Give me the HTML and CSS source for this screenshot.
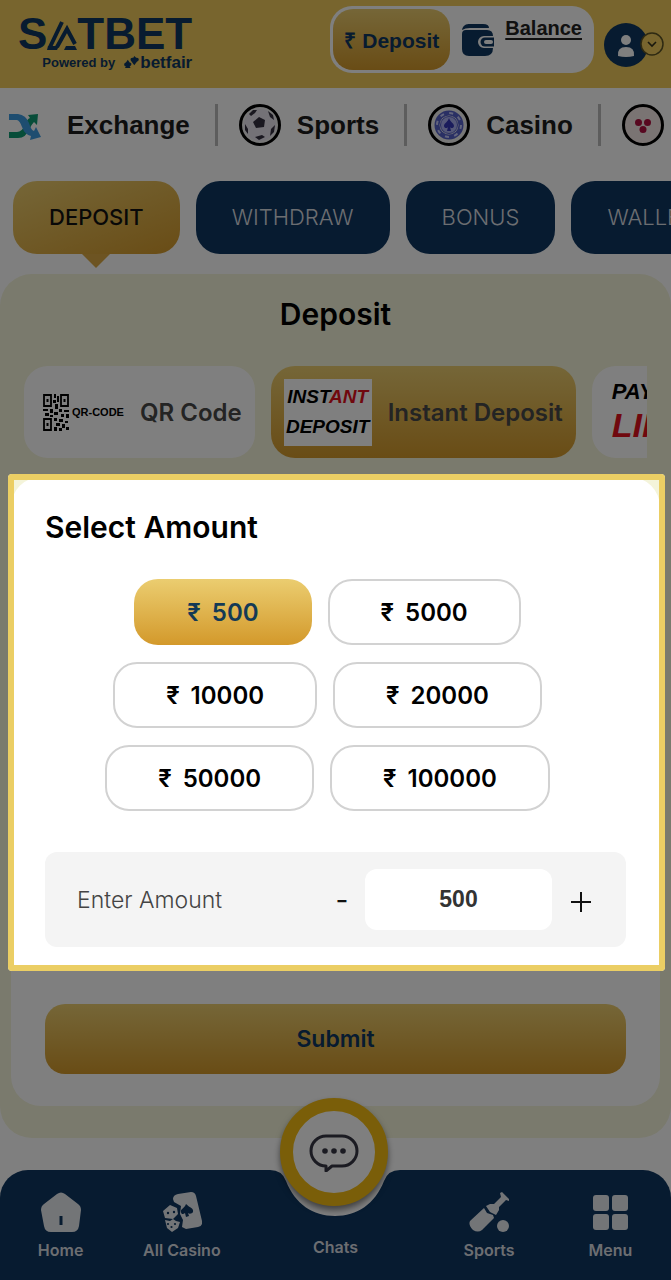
FILE: index.html
```
<!DOCTYPE html>
<html lang="en">
<head>
	<meta charset="utf-8">
	<meta name="viewport" content="width=device-width, initial-scale=1">
	<title>Satbet - Deposit</title>
	<link rel="stylesheet" href="styles.css">
</head>

<body>
	<!-- TOP -->
	<header class="top">
		<a href="#" class="logo">
			<span class="logo-name">S<svg class="logo-a" viewBox="0 0 30 32" role="img" aria-label="A"><path d="M3 29L15 4M10 29l10-18 8 15" fill="none" stroke="#0e3660" stroke-width="4"/><path d="M1 28h11l-2 4H0zM19 28h9l2 4H17z" fill="#0e3660"/></svg>TBET</span>
			<span class="logo-sub">
				<span>Powered by</span>
				<svg class="logo-mark" viewBox="0 0 16 14"><path d="M4 4l2 3c3 0 2 4 0 4l1 2H1l1-2C-1 11 0 7 2 7zM11 0l2 2c3-1 4 3 1 4l-3 4-3-4C6 4 7 1 10 2z" fill="#0e3660"/></svg>
				<b>betfair</b>
			</span>
		</a>
		<div class="top-right">
			<div class="wallet">
				<button type="button" class="wallet-btn">₹ Deposit</button>
				<svg class="wallet-icon" viewBox="0 0 34 34"><path d="M1 7c1-5 4-6 8-6h13q6 0 6 4H9Q4 5 1 7z" fill="#0e3660"/><path d="M1 11q0-4 4-4h21q6 0 6 6H23a6 6 0 0 0 0 12h9q0 8-8 8H8q-7 0-7-7z" fill="#0e3660"/><path d="M33 14.500H24a4.500 4.500 0 0 0 0 9h9z" fill="#0e3660"/><rect x="23" y="17" width="9" height="4" rx="2" fill="#fff"/></svg>
				<a href="#" class="balance">Balance</a>
			</div>
			<button type="button" class="profile" aria-label="Profile">
				<svg class="profile-icon" viewBox="0 0 60 46"><circle cx="22" cy="23" r="22" fill="#0e3660"/><circle cx="22" cy="18" r="5" fill="#fff"/><path d="M14 34q-1-9 8-9t8 9q-8 2-16 0z" fill="#fff"/><circle cx="48" cy="22" r="11" fill="#f0cb5c" stroke="#5c5324" stroke-width="1.500"/><path d="M44 20l4 4 4-4" fill="none" stroke="#33301c" stroke-width="1.600"/></svg>
			</button>
		</div>
	</header>

	<!-- Games menu -->
	<nav class="games">
		<a href="#" class="game">
			<svg class="game-icon" viewBox="0 0 42 42"><path d="M0 28h8q5 0 8-7 2-6 5-7l-2-3 10-1-1 11-3-3q-2 2-4 6-4 10-12 10H0z" fill="#0e9a72"/><path d="M0 10h9q8 1 11 9 2 7 5 8l2-4 5 10-11 3 1-4q-6-1-9-9-2-6-5-7H0z" fill="#3d9be0"/></svg>
			Exchange
		</a>
		<a href="#" class="game">
			<svg class="game-icon" viewBox="0 0 42 42"><circle cx="21" cy="21" r="19.500" fill="#eee" stroke="#000" stroke-width="3"/><circle cx="21" cy="21" r="16" fill="#e8e4ee"/><path d="M20 13l6 3-1 7-8 1-3-6zM10 10l4-4 4 0-2 3-4 3zM29 7l5 4 1 5-4-3zM36 21l-1 7-4 4 1-7zM16 33l7-2 3 2-6 3zM6 20l3 5v5l-3-4z" fill="#343040"/></svg>
			Sports
		</a>
		<a href="#" class="game">
			<svg class="game-icon" viewBox="0 0 42 42"><circle cx="21" cy="21" r="19.500" fill="#eee" stroke="#000" stroke-width="3"/><circle cx="21" cy="21" r="12" fill="none" stroke="#5560c8" stroke-width="5"/><circle cx="21" cy="21" r="12" fill="none" stroke="#c4c9fa" stroke-width="2" stroke-dasharray="4 5.400"/><circle cx="21" cy="21" r="8.500" fill="#aab0f0" stroke="#5560c8"/><path d="M21 14c1 4 5 5 5 8 0 2-3 3-4 1l1 4h-4l1-4c-1 2-4 1-4-1 0-3 4-4 5-8z" fill="#3438b8"/></svg>
			Casino
		</a>
		<a href="#" class="game">
			<svg class="game-icon" viewBox="0 0 42 42" role="img" aria-label="More games"><circle cx="21" cy="21" r="19.500" fill="#f4e9e6" stroke="#000" stroke-width="3"/><g fill="#b01040"><circle cx="16.500" cy="18.500" r="3.500"/><circle cx="25.500" cy="18.500" r="3.500"/><circle cx="21" cy="25.500" r="3.500"/></g></svg>
		</a>
	</nav>

	<nav class="tabs">
		<a href="#" class="tab active">DEPOSIT</a>
		<a href="#" class="tab">WITHDRAW</a>
		<a href="#" class="tab">BONUS</a>
		<a href="#" class="tab">WALLET</a>
	</nav>

	<main class="panel">
		<h1 class="panel-title">Deposit</h1>

		<!-- Payment methods -->
		<div class="methods">
			<button type="button" class="method">
				<span class="qr">
					<svg class="qr-icon" viewBox="0 0 26 37"><g fill="none" stroke="#000" stroke-width="1.800"><path d="M1 1h7v11H1zM18 1h7v11h-7zM1 25h7v11H1z"/></g><path d="M3.500 5h2v3h-2zM20.500 5h2v3h-2zM3.500 29h2v3h-2zM11 0h2v4h-2zM14 2h2v6h-2zM10 6h3v3h-3zM12 10h3v5h-3zM0 15h5v2H0zM7 15h3v4H7zM16 15h3v3h-3zM21 16h5v2h-5zM2 19h4v3H2zM11 18h4v3h-4zM18 20h3v3h-3zM23 20h3v4h-3zM7 21h3v2H7zM11 24h3v3h-3zM16 25h4v3h-4zM22 27h3v2h-3zM13 29h4v3h-4zM19 30h3v4h-3zM11 33h3v4h-3zM16 34h3v3h-3zM23 33h3v3h-3z"/></svg>
					QR-CODE
				</span>
				QR Code
			</button>
			<button type="button" class="method active">
				<span class="instant"><span>INST<i>ANT</i></span><span>DEPOSIT</span></span>
				Instant Deposit
			</button>
			<button type="button" class="method">
				<span class="pay"><span>PAY</span><i>LINK</i></span>
			</button>
		</div>

		<form class="card">
			<section class="amount">
				<h2 class="amount-title">Select Amount</h2>
				<div class="chips">
					<button type="button" class="chip active"><span>₹</span>500</button>
					<button type="button" class="chip"><span>₹</span>5000</button>
					<button type="button" class="chip"><span>₹</span>10000</button>
					<button type="button" class="chip"><span>₹</span>20000</button>
					<button type="button" class="chip"><span>₹</span>50000</button>
					<button type="button" class="chip"><span>₹</span>100000</button>
				</div>
				<div class="enter">
					<label for="amount" class="enter-label">Enter Amount</label>
					<button type="button" class="step">-</button>
					<input type="text" id="amount" class="enter-input" value="500" inputmode="numeric">
					<button type="button" class="step" aria-label="Increase"><svg class="plus" viewBox="0 0 20 20"><path d="M10 0v20M0 10h20" stroke="#111" stroke-width="2"/></svg></button>
				</div>
				<div class="spotlight"></div>
			</section>
			<button type="submit" class="submit">Submit</button>
		</form>
	</main>

	<!-- Bottom menu -->
	<nav class="bottom">
		<svg class="notch" viewBox="0 0 130 47"><path d="M0 0Q12 0 16 11C25 34 43 46 65 46S105 34 114 11Q118 0 130 0z" fill="#fff"/></svg>
		<a href="#" class="link">
			<svg class="link-icon" viewBox="0 0 40 40"><path d="M16 2q4-3 8 0l13 10q3 2 3 6l-2 16q-1 6-7 6H10q-6 0-7-6L0 18q0-4 3-6z" fill="#fff"/><rect x="18.500" y="24" width="3" height="9" fill="#0e3660"/></svg>
			Home
		</a>
		<a href="#" class="link">
			<svg class="link-icon" viewBox="0 0 40 40"><path d="M11 7q0-4 5-5l13-2q4 0 5 4l6 25q1 5-4 6l-12 2-4-2 1-7-3-6 1-8-7-4z" fill="#fff"/><path d="M24 12c4 4 8 4 7 8-1 2-4 2-5 1l1 3-3 1-1-4c-2 2-4 1-4-1-1-3 4-4 5-8z" fill="#0e3660"/><path d="M8 13l7 3 1 6-5 5-8-1-2-7zM3 28l5 1 3-2 3 2 4 1-2 6-6 4-5-4z" fill="#fff"/><g fill="#0e3660"><circle cx="6" cy="21" r="1.200"/><circle cx="12" cy="20" r="1.200"/><circle cx="6" cy="32" r="1.100"/><circle cx="13" cy="32" r="1.100"/><circle cx="9.500" cy="35" r="1.100"/></g></svg>
			All Casino
		</a>
		<a href="#" class="link chats">Chats</a>
		<a href="#" class="link">
			<svg class="link-icon" viewBox="0 0 40 40"><g fill="#fff"><path d="M33 0l7 7v2l-3-1-7 7v3l-3 5-6-3-4-6 4-2h4l7-7-1-4z"/><path d="M15 16l3 5 6 2 1 3-12 12q-4 3-9 0-5-5-3-9z"/><circle cx="34" cy="34" r="6"/></g></svg>
			Sports
		</a>
		<a href="#" class="link">
			<svg class="link-icon" viewBox="0 0 40 40"><g fill="#fff"><rect x="3" y="3" width="16" height="16" rx="3"/><rect x="22" y="3" width="16" height="16" rx="3"/><rect x="3" y="22" width="16" height="16" rx="3"/><rect x="22" y="22" width="16" height="16" rx="3"/></g></svg>
			Menu
		</a>
		<button type="button" class="chat-btn" aria-label="Open chat">
			<svg class="chat-icon" viewBox="0 0 50 40"><path d="M17 4h16a15 15 0 0 1 0 30H23l-6 5v-5a15 15 0 0 1 0-30z" fill="none" stroke="#363644" stroke-width="3" stroke-linejoin="round"/><g fill="#363644"><circle cx="16" cy="19" r="2.800"/><circle cx="25" cy="19" r="2.800"/><circle cx="34" cy="19" r="2.800"/></g></svg>
		</button>
	</nav>
</body>
</html>
```

FILE: styles.css
```
*{
	box-sizing: border-box;
}

body{
	margin: 0;
	background-color: #fff;
	font-family: Inter, "Liberation Sans", sans-serif;
	overflow-x: hidden;
}

a{
	color: inherit;
	text-decoration: none;
}

button{
	border: 0;
	background: none;
	font-family: inherit;
	cursor: pointer;
}

svg{
	flex: none;
}

/* ---------- Top ---------- */
.top{
	display: flex;
	justify-content: space-between;
	align-items: flex-start;
	padding: 6px 7px 15px 18px;
	background-color: #f0cb5c;
	font-family: "Liberation Sans", sans-serif;
}

.logo{
	display: flex;
	flex-direction: column;
	align-items: flex-end;
	padding-top: 6px;
	color: #0e3660;
}

.logo-name{
	display: flex;
	align-items: center;
	font-size: 44px;
	font-weight: bold;
	line-height: 44px;
}

.logo-a{
	width: 30px;
	height: 32px;
}

.logo-sub{
	display: flex;
	align-items: center;
	gap: 9px;
	font-size: 13px;
	font-weight: bold;
	line-height: 8px;
}

.logo-sub b{
	margin-left: -8px;
	font-size: 17px;
}

.logo-mark{
	width: 15px;
	height: 13px;
}

.top-right{
	display: flex;
	gap: 10px;
}

.wallet{
	display: flex;
	align-items: flex-start;
	height: 67px;
	padding: 3px 12px 3px 3px;
	border-radius: 22px;
	background-color: #fff;
}

.wallet-btn{
	height: 61px;
	padding: 0 11px;
	border-radius: 20px;
	background: linear-gradient(#ebcd70, #d3992b);
	color: #0e3660;
	font-size: 21px;
	font-weight: bold;
}

.wallet-icon{
	width: 34px;
	height: 34px;
	margin: 14px 10px 0 11px;
}

.balance{
	margin-top: 7px;
	color: #222;
	font-size: 20px;
	font-weight: bold;
	line-height: 24px;
	text-decoration: underline;
	text-underline-offset: 3px;
}

.profile{
	padding: 10px 0 0;
}

.profile-icon{
	display: block;
	width: 60px;
	height: 46px;
}

/* ---------- Games menu ---------- */
.games{
	display: flex;
	overflow: hidden;
	padding: 16px 9px 35px;
	font-family: "Liberation Sans", sans-serif;
	font-size: 26px;
	font-weight: bold;
	color: #1c1c1c;
}

.game{
	display: flex;
	flex: none;
	align-items: center;
	gap: 16px;
}

.game + .game{
	margin-left: 25px;
	padding-left: 21px;
	border-left: 3px solid #bbb;
}

.game-icon{
	width: 42px;
	height: 42px;
}

/* ---------- Tabs ---------- */
.tabs{
	display: flex;
	gap: 16px;
	overflow: hidden;
	padding: 0 13px 20px;
}

.tab{
	position: relative;
	flex: none;
	padding: 0 36px;
	border-radius: 24px;
	background-color: #0e3660;
	color: #d9dce2;
	font-size: 22px;
	font-weight: 300;
	line-height: 73px;
}

.tab.active{
	background: linear-gradient(160deg, #ebcd70, #d3992b);
	color: #111;
	font-weight: 500;
}

.tab.active::after{
	content: "";
	position: absolute;
	top: 100%;
	left: 50%;
	margin-left: -14px;
	border: 14px solid transparent;
	border-top-color: #dba944;
	border-bottom: 0;
}

/* ---------- Deposit panel ---------- */
.panel{
	padding: 24px 0 32px;
	border-radius: 32px;
	background-color: #f4f4da;
}

.panel-title{
	margin: 0 0 36px;
	font-size: 30px;
	line-height: 32px;
	font-weight: 600;
	text-align: center;
}

.methods{
	display: flex;
	gap: 16px;
	overflow: hidden;
	margin: 0 24px 19px;
}

.method{
	display: flex;
	flex: none;
	align-items: center;
	gap: 16px;
	height: 92px;
	padding: 0 13px;
	border-radius: 24px;
	background-color: #fff;
	color: #484848;
	font-size: 24px;
	font-weight: 600;
}

.method.active{
	background: linear-gradient(#ebcd70, #d3992b);
}

.qr{
	display: flex;
	align-items: center;
	gap: 3px;
	margin-left: 6px;
	color: #000;
	font-family: "Liberation Sans", sans-serif;
	font-size: 11px;
	font-weight: bold;
}

.qr-icon{
	width: 26px;
	height: 37px;
}

.instant{
	display: flex;
	flex-direction: column;
	justify-content: center;
	align-items: center;
	width: 88px;
	height: 67px;
	background-color: #fff;
	color: #000;
	font-family: "Liberation Sans", sans-serif;
	font-size: 19px;
	font-style: italic;
	font-weight: bold;
	line-height: 30px;
}

.instant i,
.pay i{
	color: #e0101c;
}

.pay{
	display: flex;
	flex-direction: column;
	padding-left: 7px;
	color: #000;
	font-family: "Liberation Sans", sans-serif;
	font-size: 22px;
	font-style: italic;
	font-weight: bold;
	line-height: 26px;
	text-align: left;
}

.pay i{
	font-size: 34px;
	line-height: 40px;
}

/* ---------- Amount ---------- */
.card{
	margin: 0 11px;
	padding: 34px 34px 32px;
	border-radius: 30px;
	background-color: #fff;
}

.amount{
	position: relative;
	margin-bottom: 57px;
}

.amount-title{
	margin: 0 0 36px;
	font-size: 30px;
	line-height: 32px;
	font-weight: 600;
}

.chips{
	display: flex;
	flex-wrap: wrap;
	justify-content: center;
	margin-bottom: 24px;
}

.chip{
	height: 66px;
	margin: 0 16px 17px 0;
	padding: 0 51px;
	border: 2px solid #d2d2d2;
	border-radius: 24px;
	color: #000;
	font-size: 24px;
	font-weight: 600;
}

.chip span{
	margin-right: 11px;
}

.chip.active{
	border-color: transparent;
	background: linear-gradient(#ebcd70, #d3992b) border-box;
	color: #143a55;
}

.enter{
	display: flex;
	align-items: center;
	height: 95px;
	padding: 0 28px 0 32px;
	border-radius: 12px;
	background-color: #f4f4f4;
}

.enter-label{
	flex: 1;
	color: #444;
	font-size: 23px;
	font-weight: 300;
}

.enter-input{
	width: 187px;
	height: 61px;
	border: 0;
	border-radius: 12px;
	background-color: #fff;
	color: #333;
	font-family: "Liberation Sans", sans-serif;
	font-size: 23px;
	font-weight: bold;
	text-align: center;
}

.step{
	width: 46px;
	padding: 0;
	color: #111;
	font-size: 28px;
}

.step .plus{
	display: block;
	width: 20px;
	height: 20px;
	margin: 4px 0 0 19px;
}

.submit{
	display: block;
	width: 100%;
	height: 70px;
	border-radius: 20px;
	background: linear-gradient(#ebcd70, #d3992b);
	color: #0e3660;
	font-size: 23px;
	font-weight: 600;
}

/* darkens everything around the amount block */
.spotlight{
	position: absolute;
	inset: -37px -39px -24px -37px;
	z-index: 10;
	border: 6px solid #ebce64;
	border-radius: 4px;
	box-shadow: 0 0 0 2000px rgba(0,0,0,0.5);
	pointer-events: none;
}

/* ---------- Bottom menu ---------- */
.bottom{
	position: relative;
	display: grid;
	grid-template-columns: 1fr 1fr 186px 1fr 1fr;
	height: 110px;
	margin-top: 32px;
	padding-top: 22px;
	border-radius: 28px 28px 0 0;
	background-color: #0e3660;
}

.link{
	display: flex;
	flex-direction: column;
	align-items: center;
	gap: 8px;
	color: #d9dce2;
	font-size: 16px;
	font-weight: 600;
	line-height: 20px;
}

.link.chats{
	padding-top: 45px;
}

.link-icon{
	width: 40px;
	height: 40px;
	opacity: 0.9;
}

.notch{
	position: absolute;
	top: 0;
	left: 50%;
	width: 130px;
	height: 47px;
	margin-left: -66px;
}

.chat-btn{
	position: absolute;
	top: -72px;
	left: 50%;
	display: flex;
	align-items: center;
	justify-content: center;
	width: 108px;
	height: 108px;
	margin-left: -56px;
	padding: 0;
	border: 13px solid #f5bd12;
	border-radius: 50%;
	background-color: #fff;
	box-shadow: 0 4px 6px rgba(0,0,0,0.5);
}

.chat-icon{
	width: 50px;
	height: 40px;
}
```
